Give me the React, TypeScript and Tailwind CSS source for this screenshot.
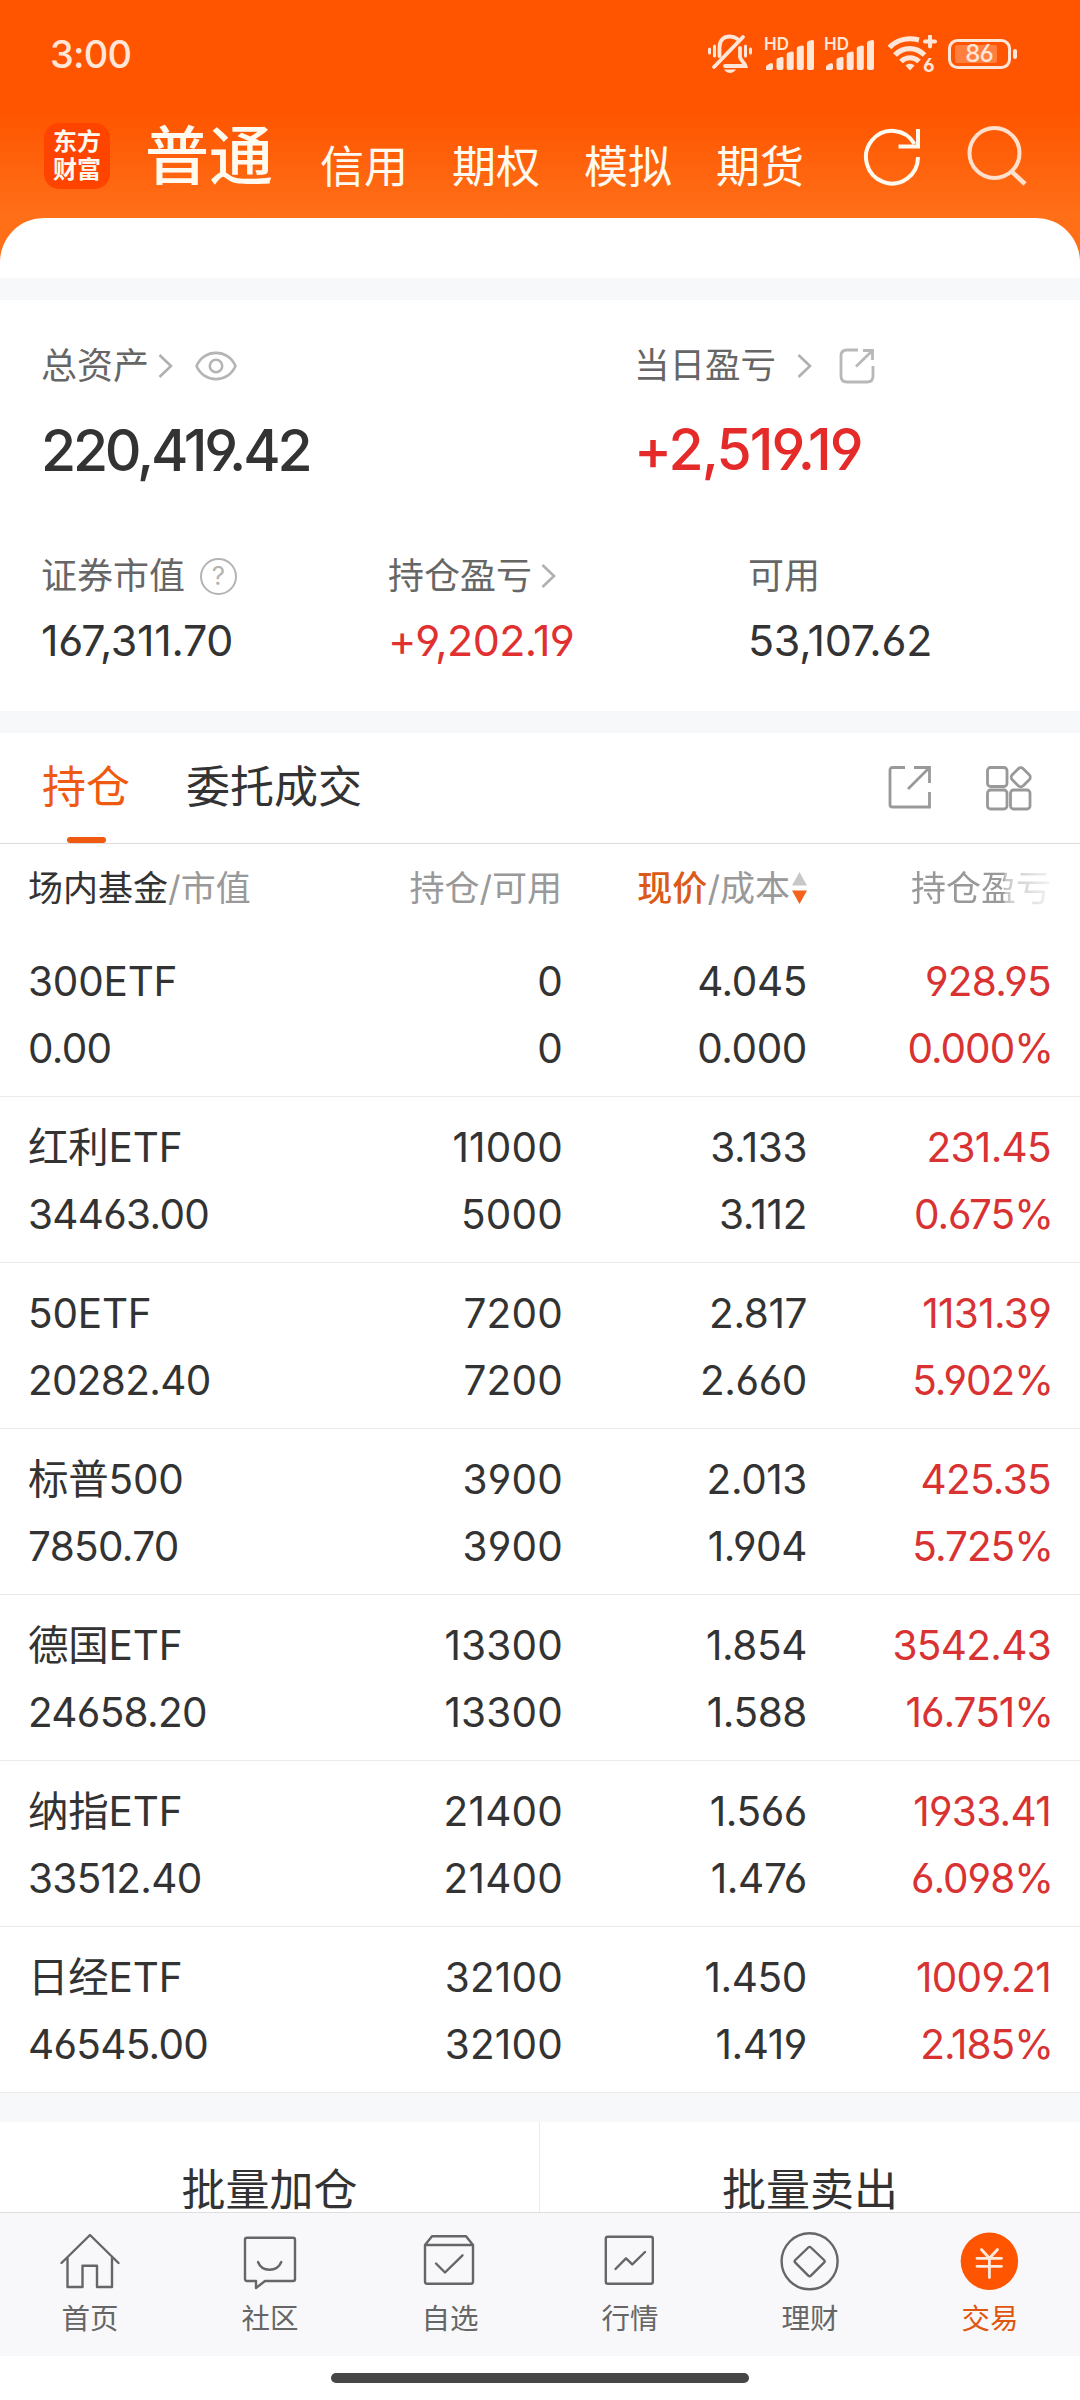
import React, { useState } from 'react';

const tabs = ['信用', '期权', '模拟', '期货'];

const holdings = [
  { name: '300ETF', value: '0.00', amount: '0', usable: '0', price: '4.045', cost: '0.000', profit: '928.95', rate: '0.000%' },
  { name: '红利ETF', value: '34463.00', amount: '11000', usable: '5000', price: '3.133', cost: '3.112', profit: '231.45', rate: '0.675%' },
  { name: '50ETF', value: '20282.40', amount: '7200', usable: '7200', price: '2.817', cost: '2.660', profit: '1131.39', rate: '5.902%' },
  { name: '标普500', value: '7850.70', amount: '3900', usable: '3900', price: '2.013', cost: '1.904', profit: '425.35', rate: '5.725%' },
  { name: '德国ETF', value: '24658.20', amount: '13300', usable: '13300', price: '1.854', cost: '1.588', profit: '3542.43', rate: '16.751%' },
  { name: '纳指ETF', value: '33512.40', amount: '21400', usable: '21400', price: '1.566', cost: '1.476', profit: '1933.41', rate: '6.098%' },
  { name: '日经ETF', value: '46545.00', amount: '32100', usable: '32100', price: '1.450', cost: '1.419', profit: '1009.21', rate: '2.185%' },
];

const Chevron = ({ className }: { className?: string }) => (
  <svg className={className} width="15" height="26" viewBox="0 0 15 26" fill="none" stroke="#b0b0b0" strokeWidth="2.6">
    <path d="M1.5 2 L13 13 L1.5 24" />
  </svg>
);

const BellOff = () => (
  <svg width="44" height="40" viewBox="0 0 44 40" fill="none" stroke="#ffe6d8" strokeWidth="3.8" strokeLinecap="round">
    <path d="M1.5 15v4M6.5 12v10M42.500 15v4M37.500 12v10" strokeWidth="3" />
    <path d="M11.500 22V13.500C11.500 6 16 2.500 21.500 2.500C25 2.500 27.500 3.500 29.500 5" />
    <path d="M32 14v9c0 3 4.500 5 5.500 9H17" />
    <path d="M35 3 L6 33" />
    <path d="M16 35.500h12c-3 4.500-9 4.500-12 0z" fill="#ffe6d8" stroke="none" />
  </svg>
);

const Signal = () => (
  <div className="relative w-[50px] h-[36px]">
    <span className="absolute left-0 top-0 text-[17px] leading-[16px] font-semibold">HD</span>
    <svg width="50" height="36" viewBox="0 0 50 36" fill="#ffe6d8">
      <path d="M2 34V31q0-2 2-2.500L7 27q2 0 2 2v3q0 2-2 2H4q-2 0-2 0z" />
      <path d="M12.500 32V24q0-1.500 1.500-2l3.500-1q2-.500 2 1.500V32q0 2-2 2h-3q-2 0-2-2z" />
      <path d="M22.700 32V18.500q0-1.500 1.500-2l3.500-1q2-.500 2 1.500V32q0 2-2 2h-3q-2 0-2-2z" />
      <path d="M32.800 32V12.500q0-1.500 1.500-2l3.500-1q2-.500 2 1.500V32q0 2-2 2h-3q-2 0-2-2z" />
      <path d="M43 32V7q0-1.500 1.500-2l3.500-1q2-.500 2 1.500V32q0 2-2 2h-3q-2 0-2-2z" />
    </svg>
  </div>
);

const Wifi = () => (
  <div className="relative w-[50px] h-[38px]">
    <svg width="50" height="38" viewBox="0 0 50 38" fill="none" stroke="#ffe6d8" strokeWidth="5.2">
      <path d="M2.500 12.500C10 4.500 21 2.200 32 5" />
      <path d="M8 20C16 11.500 29 11.500 37.500 20" />
      <path d="M14 26.500C19 21.500 27 21.500 32 26.500" />
      <path d="M18.500 30.500C21 28 25 28 27.500 30.500L23 35.500z" fill="#ffe6d8" stroke="none" />
      <path d="M43 1.500v10M38 6.500h10" strokeWidth="4" strokeLinecap="round" />
    </svg>
    <span className="absolute left-[36px] top-[22px] text-[19px] leading-[18px] font-bold">6</span>
  </div>
);

const Battery = () => (
  <div className="relative w-[70px] h-[30px]">
    <svg width="70" height="30" viewBox="0 0 70 30">
      <rect x="1.500" y="1.500" width="60" height="27" rx="8" fill="none" stroke="#ffe6d8" strokeWidth="3" />
      <rect x="7" y="6" width="42" height="18" rx="2" fill="#ffffff" opacity="0.25" />
      <rect x="65" y="10" width="4" height="10" rx="2" fill="#ffe6d8" />
    </svg>
    <span className="absolute left-0 top-[3px] w-[62px] text-center text-[24px] leading-[24px] font-medium tracking-[-1px]">86</span>
  </div>
);

const navItems = [
  {
    label: '首页',
    icon: <path d="M1.500 32 L30 4 L58.500 32 M7.500 27V56H22.500V34.700H37V56H52V27" />,
  },
  {
    label: '社区',
    icon: (
      <>
        <path d="M7 6.700H53q2 0 2 2V48q0 2-2 2H25L16 57V50H7q-2 0-2-2V8.700q0-2 2-2z" />
        <path d="M18 31C22 41.300 37 41.300 41.300 31" />
      </>
    ),
  },
  {
    label: '自选',
    icon: (
      <>
        <path d="M5 14 L12 5.300H46L53 14V50.500q0 2.200-2 2.200H7q-2 0-2-2.200zM5 14H53" />
        <path d="M16 32.500 L25 41.500 L42.500 24.300" />
      </>
    ),
  },
  {
    label: '行情',
    icon: (
      <>
        <rect x="5.800" y="5.700" width="47" height="47" rx="2" />
        <path d="M15.500 38 L26 27.300 L32.300 33.300 L45 21" />
      </>
    ),
  },
  {
    label: '理财',
    icon: (
      <>
        <circle cx="29.600" cy="30.300" r="28" />
        <path d="M28.300 16.500q1.300-1.300 2.600 0L44 29q1.300 1.300 0 2.600L30.900 44.600q-1.300 1.300-2.600 0L15.300 31.600q-1.300-1.300 0-2.600z" />
      </>
    ),
  },
  {
    label: '交易',
    icon: (
      <>
        <circle cx="29.400" cy="30.300" r="28.700" fill="#ff5500" stroke="none" />
        <path d="M21.500 18.500 L29.400 27.300 L37.500 18.500M17 27.300H41.500M17 35.300H41.500M29.400 27V46.500" stroke="#ffe9dc" strokeWidth="2.800" />
      </>
    ),
  },
];

const Header = () => (
  <div className="bg-[linear-gradient(to_bottom,#ff5500_0px,#ff5500_112px,#ff6f18_215px,#ff6f18_278px)]">
    <div className="h-[108px] flex items-center pl-[50px] text-[#ffe6d8]">
      <span className="text-[38px] leading-[38px] font-medium tracking-[-0.800px] w-[658px]">3:00</span>
      <BellOff />
      <div className="ml-[12px]"><Signal /></div>
      <div className="ml-[10px]"><Signal /></div>
      <div className="ml-[13px]"><Wifi /></div>
      <div className="ml-[11px]"><Battery /></div>
    </div>
    <div className="h-[110px] flex items-start pl-[44px] text-[#fffaf0]">
      <div className="mt-[15px] w-[66px] h-[66px] rounded-[15px] bg-[#ff4400] flex flex-col items-center justify-center text-[24px] leading-[28px] font-bold">
        <span>东方</span>
        <span>财富</span>
      </div>
      <span className="ml-[35px] mt-[16px] text-[64px] leading-[64px] font-medium w-[175px]">普通</span>
      <div className="flex gap-[44px] mt-[37px]">
        {tabs.map((tab) => (
          <span key={tab} className="text-[44px] leading-[44px]">{tab}</span>
        ))}
      </div>
      <svg className="ml-[57px] mt-[18px]" width="62" height="60" viewBox="0 0 62 60" fill="none" stroke="#fffaf0" strokeWidth="4">
        <path d="M57 31A26 26.300 0 1 1 53.500 18" />
        <path d="M37.500 20.500H57V3" />
      </svg>
      <svg className="ml-[44px] mt-[18px]" width="62" height="62" viewBox="0 0 62 62" fill="none" stroke="#ffe0cd" strokeWidth="4">
        <circle cx="27.500" cy="27" r="25" />
        <path d="M43.500 44.500 L58 58" strokeWidth="4.500" />
      </svg>
    </div>
    <div className="h-[60px] bg-white rounded-t-[44px]" />
  </div>
);

const Summary = () => (
  <div className="h-[411px] pl-[41px] text-[36px] leading-[36px] text-[#666666]">
    <div className="flex pt-[48px]">
      <div className="w-[593px]">
        <div className="flex items-center h-[36px]">
          <span>总资产</span>
          <Chevron className="ml-[9px]" />
          <svg className="ml-[22px]" width="42" height="30" viewBox="0 0 42 30" fill="none" stroke="#b4b4b4" strokeWidth="2.600">
            <path d="M1.500 15C9-2.500 33-2.500 40.500 15C33 32.500 9 32.500 1.500 15z" />
            <circle cx="21" cy="15" r="6.200" />
          </svg>
        </div>
        <div className="mt-[37px] text-[57px] leading-[60px] font-medium tracking-[-3.200px] text-[#333333]">220,419.42</div>
      </div>
      <div>
        <div className="flex items-center h-[36px]">
          <span className="text-[35.500px]">当日盈亏</span>
          <Chevron className="ml-[21px]" />
          <svg className="ml-[27px]" width="36" height="36" viewBox="0 0 36 36" fill="none" stroke="#b8b8b8" strokeWidth="2.800">
            <path d="M19 2H8Q2 2 2 8V28Q2 34 8 34H28Q34 34 34 28V18" />
            <path d="M24 2.500H33.500V12M33 3 L17 18.500" />
          </svg>
        </div>
        <div className="mt-[36px] text-[57px] leading-[60px] font-medium tracking-[-1.900px] text-[#e52a2a]">+2,519.19</div>
      </div>
    </div>
    <div className="flex mt-[77px]">
      <div className="w-[347px]">
        <div className="flex items-center h-[36px]">
          <span>证券市值</span>
          <div className="ml-[15px] w-[37px] h-[37px] rounded-full border-[2.500px] border-[#b4b4b4] text-[#b4b4b4] text-[26px] leading-[32px] text-center">?</div>
        </div>
        <div className="mt-[24px] text-[43px] leading-[44px] tracking-[-0.300px] text-[#333333]">167,311.70</div>
      </div>
      <div className="w-[360px]">
        <div className="flex items-center h-[36px]">
          <span>持仓盈亏</span>
          <Chevron className="ml-[9px]" />
        </div>
        <div className="mt-[24px] text-[43px] leading-[44px] tracking-[-0.600px] text-[#e03030]">+9,202.19</div>
      </div>
      <div>
        <div className="h-[36px]">可用</div>
        <div className="mt-[24px] text-[43px] leading-[44px] tracking-[-0.300px] text-[#333333]">53,107.62</div>
      </div>
    </div>
  </div>
);

const TableHead = () => (
  <div className="h-[87px] flex items-center px-[28px] text-[35px] leading-[36px] text-[#999999]">
    <div className="w-[262px]"><span className="text-[#333333]">场内基金</span>/市值</div>
    <div className="w-[272px] text-right">持仓/可用</div>
    <div className="w-[245px] flex justify-end items-center">
      <span><span className="text-[#dc5a18] font-medium">现价</span>/成本</span>
      <svg className="ml-[2px]" width="15" height="32" viewBox="0 0 15 32">
        <path d="M7.500 0 L15 13.500H0z" fill="#c8c8c8" />
        <path d="M0 18.500H15L7.500 32z" fill="#f4621c" />
      </svg>
    </div>
    <div className="w-[244px] flex justify-end">
      <span className="[mask-image:linear-gradient(to_right,#000_0px,#000_93px,rgba(0,0,0,0.55)_94px,rgba(0,0,0,0.12)_140px)]">持仓盈亏</span>
    </div>
  </div>
);

export default function App() {
  const [activeNav, setActiveNav] = useState('交易');

  return (
    <div className="w-[1080px] h-[2400px] overflow-hidden bg-white flex flex-col font-['Inter','Noto_Sans_CJK_SC',sans-serif] [font-feature-settings:'cv03','cv04']">
      <Header />
      <div className="h-[22px] bg-[#f7f8fa]" />
      <Summary />
      <div className="h-[22px] bg-[#f7f8fa]" />

      {/* tabs */}
      <div className="h-[111px] flex border-b border-[#dcdcdc] pl-[42px] text-[44px] leading-[44px]">
        <div className="w-[88px] flex flex-col items-center justify-between text-[#f05a10]">
          <span className="mt-[32px]">持仓</span>
          <div className="w-[39px] h-[6px] rounded-full bg-[#f05a10]" />
        </div>
        <span className="ml-[56px] mt-[32px] w-[702px] text-[#333333]">委托成交</span>
        <svg className="mt-[32px]" width="44" height="44" viewBox="0 0 44 44" fill="none" stroke="#999999" strokeWidth="2.800">
          <path d="M17 2.500H4.500Q2 2.500 2 5V40Q2 42 4.500 42H41.500V27" />
          <path d="M26 2.500H41.500V18M41 3 L20 24" />
        </svg>
        <svg className="ml-[53px] mt-[32px]" width="48" height="46" viewBox="0 0 48 46" fill="none" stroke="#999999" strokeWidth="2.800">
          <rect x="2.500" y="2.500" width="19.500" height="19" rx="3" />
          <rect x="2.500" y="25" width="19.500" height="19" rx="3" />
          <rect x="25.500" y="25" width="19.500" height="19" rx="3" />
          <rect x="28" y="4.500" width="15.500" height="15.500" rx="3.500" transform="rotate(45 35.750 12.250)" />
        </svg>
      </div>
      <TableHead />

      {/* holdings */}
      {holdings.map((item) => (
        <div key={item.name} className="h-[166px] shrink-0 flex border-b border-[#ebebeb] px-[28px] pt-[17px] text-[40.500px] leading-[67px] text-[#333333]">
          <div className="w-[262px]">
            <div className="tracking-[-0.200px]">{item.name}</div>
            <div className="tracking-[-0.700px]">{item.value}</div>
          </div>
          <div className="w-[273px] text-right tracking-[0.200px]">
            <div>{item.amount}</div>
            <div>{item.usable}</div>
          </div>
          <div className="w-[244px] text-right tracking-[-0.400px]">
            <div>{item.price}</div>
            <div>{item.cost}</div>
          </div>
          <div className="w-[244px] text-right text-[#d93232]">
            <div className="tracking-[-0.700px]">{item.profit}</div>
            <div className="tracking-[-1px] -mr-[2px]">{item.rate}</div>
          </div>
        </div>
      ))}
      <div className="h-[29px] shrink-0 bg-[#f7f8fa]" />
      <div className="h-[90px] shrink-0 flex text-[44px] leading-[44px] text-center text-[#333333]">
        <div className="w-[540px] pt-[46px] border-r border-[#ebebeb]">批量加仓</div>
        <div className="w-[540px] pt-[46px]">批量卖出</div>
      </div>

      {/* bottom nav */}
      <div className="h-[144px] shrink-0 flex bg-[#f8f8fa] border-t border-[#dedede]">
        {navItems.map((item) => (
          <button
            key={item.label}
            onClick={() => setActiveNav(item.label)}
            className={`w-[180px] flex flex-col items-center pt-[18px] text-[28.500px] leading-[30px] ${activeNav === item.label ? 'text-[#e0560f]' : 'text-[#666666]'}`}
          >
            <svg width="60" height="60" viewBox="0 0 60 60" fill="none" stroke="#666666" strokeWidth="2.400" strokeLinejoin="round" strokeLinecap="round">
              {item.icon}
            </svg>
            <span className="mt-[13px]">{item.label}</span>
          </button>
        ))}
      </div>
      <div className="h-[44px] shrink-0 flex justify-center pt-[17px]">
        <div className="w-[418px] h-[10px] rounded-full bg-[#464646]" />
      </div>
    </div>
  );
}
